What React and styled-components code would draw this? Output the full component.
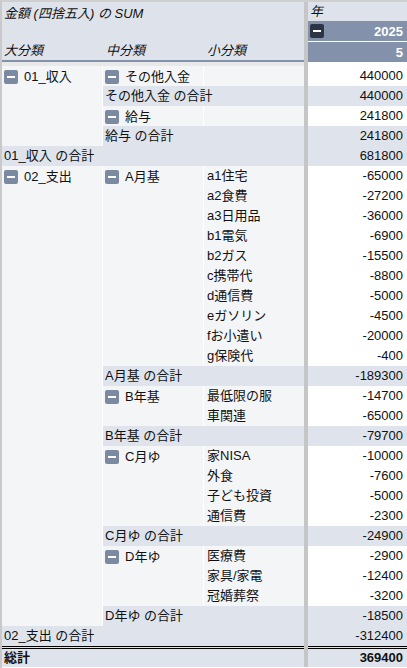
import React from 'react';
import styled, { createGlobalStyle } from 'styled-components';

const GlobalStyle = createGlobalStyle`
  html, body {
    margin: 0;
    padding: 0;
    background: #ffffff;
  }
  body {
    font-family: "Liberation Sans", "Noto Sans CJK JP", sans-serif;
    font-size: 13px;
    color: #111;
  }
`;

const Wrap = styled.div`
  width: 407px;
  height: 668px;
  overflow: hidden;
  box-sizing: border-box;
  border-left: 2px solid #c9c9c9;
  border-top: 2px solid #cfcfcf;
  background: #ffffff;
`;

const Table = styled.table`
  border-collapse: separate;
  border-spacing: 0;
  table-layout: fixed;
  width: 405px;
`;

const Cell = styled.td`
  box-sizing: border-box;
  height: 20px;
  padding: 0 4px 0 ${p => p.$pl || 2}px;
  white-space: nowrap;
  overflow: hidden;
  vertical-align: middle;
  line-height: 18px;
  background: ${p => (p.$total ? '#dfe4ec' : '#f4f5f7')};
  border-left: ${p => (p.$first ? 'none' : '1px solid #ffffff')};
  border-top: ${p => (p.$grand ? '3px double #000' : 'none')};
  font-weight: ${p => (p.$grand ? 700 : 400)};
`;

const ValueCell = styled.td`
  box-sizing: border-box;
  height: 20px;
  padding: 0 4px 0 0;
  text-align: right;
  white-space: nowrap;
  line-height: 18px;
  background: ${p => (p.$total ? '#dfe4ec' : '#ffffff')};
  border-top: ${p => (p.$grand ? '3px double #000' : 'none')};
  font-weight: ${p => (p.$grand ? 700 : 400)};
`;

const Sep = styled.td`
  padding: 0;
  width: 4px;
  background: #c6c6c6;
`;

const HeadCell = styled.td`
  box-sizing: border-box;
  padding: 0 4px 0 ${p => p.$pl || 2}px;
  background: #dee3eb;
  font-style: italic;
  white-space: nowrap;
  vertical-align: ${p => (p.$top ? 'top' : 'middle')};
  height: ${p => p.$h || 20}px;
  padding-top: ${p => (p.$top ? 4 : 0)}px;
  line-height: 16px;
  border-bottom: ${p => (p.$line ? '2px solid #8391ab' : 'none')};
`;

const ColHead = styled.td`
  box-sizing: border-box;
  height: ${p => p.$h || 20}px;
  padding: 0 4px 0 2px;
  background: #8391ab;
  color: #ffffff;
  font-weight: 700;
  text-align: right;
  border-bottom: ${p => (p.$gap ? '1px solid #ffffff' : 'none')};
`;

const ColHeadInner = styled.div`
  display: flex;
  align-items: center;
  justify-content: space-between;
`;

const Spacer = styled.td`
  height: 4px;
  padding: 0;
  background: ${p => (p.$light ? '#ffffff' : '#e9e9e9')};
`;

const Label = styled.div`
  display: flex;
  align-items: center;
  gap: 6px;
`;

const Toggle = styled.span`
  position: relative;
  display: inline-block;
  flex: none;
  width: 14px;
  height: 14px;
  border-radius: 2px;
  background: ${p => (p.$dark ? '#2d3446' : '#7b89a1')};
  &::after {
    content: '';
    position: absolute;
    left: 3px;
    top: 6px;
    width: 8px;
    height: 2px;
    background: #ffffff;
  }
`;

const Tog = ({ children }) => (
  <Label>
    <Toggle />
    <span>{children}</span>
  </Label>
);

// 明細行
const detail = (top, mid, small, value) => ({ type: 'detail', top, mid, small, value });

const rows = [
  { type: 'detail', top: { text: '01_収入', span: 4 }, mid: { text: 'その他入金', span: 1 }, small: '', value: 440000 },
  { type: 'sub2', text: 'その他入金 の合計', value: 440000 },
  { type: 'detail', mid: { text: '給与', span: 1 }, small: '', value: 241800 },
  { type: 'sub2', text: '給与 の合計', value: 241800 },
  { type: 'sub3', text: '01_収入 の合計', value: 681800 },
  { type: 'detail', top: { text: '02_支出', span: 23 }, mid: { text: 'A月基', span: 10 }, small: 'a1住宅', value: -65000 },
  detail(null, null, 'a2食費', -27200),
  detail(null, null, 'a3日用品', -36000),
  detail(null, null, 'b1電気', -6900),
  detail(null, null, 'b2ガス', -15500),
  detail(null, null, 'c携帯代', -8800),
  detail(null, null, 'd通信費', -5000),
  detail(null, null, 'eガソリン', -4500),
  detail(null, null, 'fお小遣い', -20000),
  detail(null, null, 'g保険代', -400),
  { type: 'sub2', text: 'A月基 の合計', value: -189300 },
  { type: 'detail', mid: { text: 'B年基', span: 2 }, small: '最低限の服', value: -14700 },
  detail(null, null, '車関連', -65000),
  { type: 'sub2', text: 'B年基 の合計', value: -79700 },
  { type: 'detail', mid: { text: 'C月ゆ', span: 4 }, small: '家NISA', value: -10000 },
  detail(null, null, '外食', -7600),
  detail(null, null, '子ども投資', -5000),
  detail(null, null, '通信費', -2300),
  { type: 'sub2', text: 'C月ゆ の合計', value: -24900 },
  { type: 'detail', mid: { text: 'D年ゆ', span: 3 }, small: '医療費', value: -2900 },
  detail(null, null, '家具/家電', -12400),
  detail(null, null, '冠婚葬祭', -3200),
  { type: 'sub2', text: 'D年ゆ の合計', value: -18500 },
  { type: 'sub3', text: '02_支出 の合計', value: -312400 },
];

function BodyRow({ row }) {
  if (row.type === 'sub2') {
    return (
      <tr>
        <Cell colSpan={2} $total>{row.text}</Cell>
        <Sep />
        <ValueCell $total>{row.value}</ValueCell>
      </tr>
    );
  }
  if (row.type === 'sub3') {
    return (
      <tr>
        <Cell colSpan={3} $total $first>{row.text}</Cell>
        <Sep />
        <ValueCell $total>{row.value}</ValueCell>
      </tr>
    );
  }
  return (
    <tr>
      {row.top && (
        <Cell $first rowSpan={row.top.span} style={{ verticalAlign: 'top', paddingTop: 2 }}>
          <Tog>{row.top.text}</Tog>
        </Cell>
      )}
      {row.mid && (
        <Cell rowSpan={row.mid.span} style={{ verticalAlign: 'top', paddingTop: 2 }}>
          <Tog>{row.mid.text}</Tog>
        </Cell>
      )}
      <Cell $pl={3}>{row.small}</Cell>
      <Sep />
      <ValueCell>{row.value}</ValueCell>
    </tr>
  );
}

export default function App() {
  return (
    <Wrap>
      <GlobalStyle />
      <Table>
        <colgroup>
          <col style={{ width: 100 }} />
          <col style={{ width: 101 }} />
          <col style={{ width: 101 }} />
          <col style={{ width: 4 }} />
          <col style={{ width: 99 }} />
        </colgroup>
        <tbody>
          <tr>
            <HeadCell colSpan={3} rowSpan={2} $top>金額 (四捨五入) の SUM</HeadCell>
            <Sep />
            <HeadCell $h={19}>年</HeadCell>
          </tr>
          <tr>
            <Sep />
            <ColHead $h={21} $gap>
              <ColHeadInner>
                <Toggle $dark />
                <span>2025</span>
              </ColHeadInner>
            </ColHead>
          </tr>
          <tr>
            <HeadCell $line $h={20}>大分類</HeadCell>
            <HeadCell $line $h={20} $pl={4}>中分類</HeadCell>
            <HeadCell $line $h={20} $pl={4}>小分類</HeadCell>
            <Sep />
            <ColHead $h={20}>5</ColHead>
          </tr>
          <tr>
            <Spacer colSpan={3} />
            <Sep />
            <Spacer $light />
          </tr>
          {rows.map((row, i) => (
            <BodyRow key={i} row={row} />
          ))}
          <tr>
            <Cell colSpan={3} $first $total $grand>総計</Cell>
            <Sep />
            <ValueCell $total $grand>369400</ValueCell>
          </tr>
        </tbody>
      </Table>
    </Wrap>
  );
}
